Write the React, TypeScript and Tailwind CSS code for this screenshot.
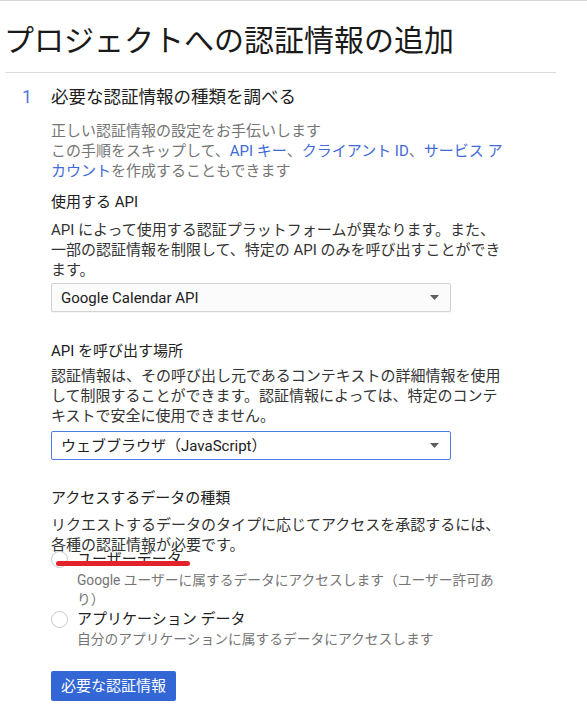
import React from 'react';

const Arrow = () => (
  <svg width="9" height="5" viewBox="0 0 9 5" className="shrink-0">
    <polygon points="0,0 9,0 4.5,5" fill="#5f5f5f" />
  </svg>
);

const Radio = () => (
  <span className="size-[17px] shrink-0 rounded-full border-[1.5px] border-[#c8c8c8]" />
);

const App: React.FC = () => {
  return (
    <div className="min-h-[722px] w-full border-t border-[#d6d6d6] bg-white pt-[20px] font-[family-name:Roboto,'Noto_Sans_CJK_JP',sans-serif]">
      {/* Page title */}
      <h1 className="pl-[4px] text-[30px] leading-[40px] font-normal text-[#1a1a1a]">
        プロジェクトへの認証情報の追加
      </h1>
      <div className="ml-[5px] mt-[11px] h-px w-[551px] bg-[#dadada]" />

      {/* Step 1 */}
      <div className="flex">
        <div className="w-[51px] shrink-0 pl-[22px] pt-[12px]">
          <span className="text-[17.5px] leading-[24px] text-[#4f76d9]">1</span>
        </div>
        <div className="w-[458px] shrink-0">
          <h2 className="mt-[12px] text-[17.5px] leading-[24px] font-normal text-[#212121]">
            必要な認証情報の種類を調べる
          </h2>

          <p className="mt-[12px] text-[15px] leading-[20px] text-[#757575]">
            正しい認証情報の設定をお手伝いします
            <br />
            この手順をスキップして、<span className="text-[#3f6ad8]">API キー</span>、
            <span className="text-[#3f6ad8]">クライアント ID</span>、
            <span className="text-[#3f6ad8]">サービス アカウント</span>を作成することもできます
          </p>

          {/* API */}
          <div className="mt-[11px] text-[15px] leading-[20px] text-[#212121]">使用する API</div>
          <p className="mt-[8px] text-[15px] leading-[20px] text-[#333333]">
            API によって使用する認証プラットフォームが異なります。また、一部の認証情報を制限して、特定の API のみを呼び出すことができます。
          </p>
          <div className="mt-[3px] flex h-[29px] w-[400px] items-center justify-between rounded-[2px] border border-[#d2d2d2] bg-[#fbfbfb] pl-[9px] pr-[11px] shadow-[0_1px_1px_rgba(0,0,0,0.04)]">
            <span className="text-[15px] leading-[20px] text-[#212121]">Google Calendar API</span>
            <Arrow />
          </div>

          {/* Where */}
          <div className="mt-[29px] text-[15px] leading-[20px] text-[#212121]">API を呼び出す場所</div>
          <p className="mt-[5px] text-[15px] leading-[20px] text-[#333333]">
            認証情報は、その呼び出し元であるコンテキストの詳細情報を使用して制限することができます。認証情報によっては、特定のコンテキストで安全に使用できません。
          </p>
          <div className="mt-[5px] flex h-[29px] w-[400px] items-center justify-between rounded-[2px] border border-[#4a7de2] bg-white pl-[9px] pr-[11px]">
            <span className="text-[15px] leading-[20px] text-[#212121]">ウェブブラウザ（JavaScript）</span>
            <Arrow />
          </div>

          {/* Data type */}
          <div className="mt-[28px] text-[15px] leading-[20px] text-[#212121]">アクセスするデータの種類</div>
          <p className="mt-[7px] text-[15px] leading-[20px] text-[#333333]">
            リクエストするデータのタイプに応じてアクセスを承認するには、各種の認証情報が必要です。
          </p>

          <div className="relative -mt-[6px] flex h-[20px] items-center">
            <Radio />
            <span className="ml-[9px] text-[15px] leading-[20px] text-[#212121]">ユーザーデータ</span>
            <span className="absolute left-[5px] top-[12px] h-[5px] w-[134px] rounded-full bg-[#e3232c]" />
          </div>
          <p className="mt-[2px] pl-[26px] text-[13.75px] leading-[19px] text-[#757575]">
            Google ユーザーに属するデータにアクセスします（ユーザー許可あり）
          </p>

          <div className="flex h-[20px] items-center">
            <Radio />
            <span className="ml-[9px] text-[15px] leading-[20px] text-[#212121]">アプリケーション データ</span>
          </div>
          <p className="mt-[1px] pl-[26px] text-[13.75px] leading-[19px] text-[#757575]">
            自分のアプリケーションに属するデータにアクセスします
          </p>

          <button className="mt-[22px] h-[30px] rounded-[2px] bg-[#3367d6] px-[10px] text-[15px] leading-[20px] text-white">
            必要な認証情報
          </button>
        </div>
      </div>
    </div>
  );
};

export default App;
